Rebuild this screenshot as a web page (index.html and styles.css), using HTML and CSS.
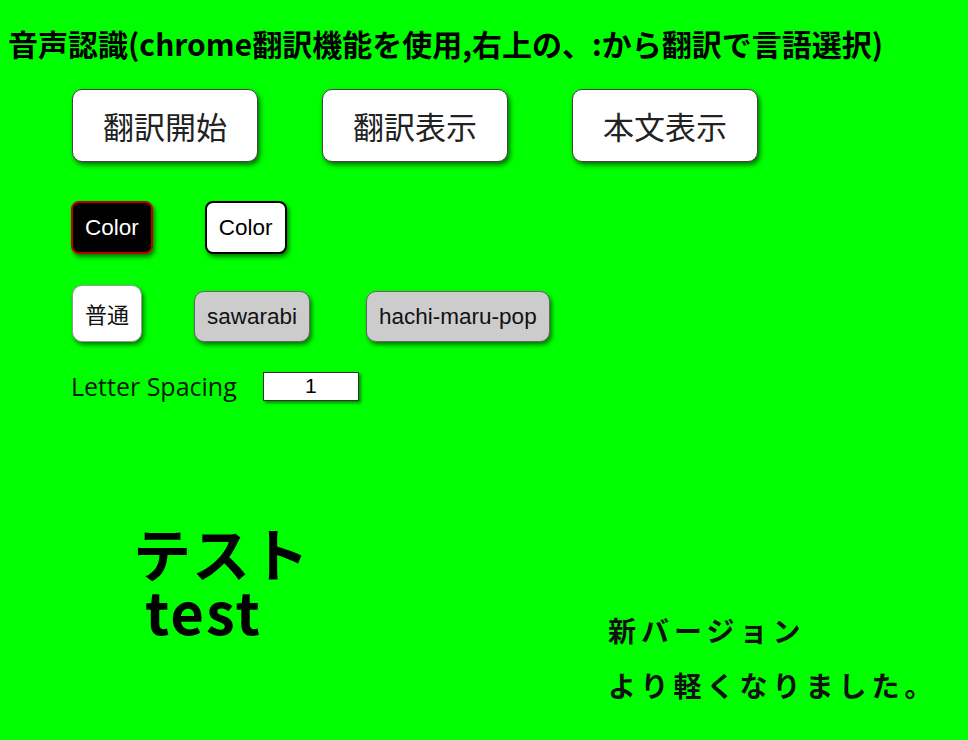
FILE: index.html
```html
<!DOCTYPE html>
<html lang="ja">
<head>
<meta charset="utf-8">
<title>音声認識</title>
<link rel="stylesheet" href="styles.css">
</head>
<body>
<h1 class="title">音声認識(chrome翻訳機能を使用,右上の、:から翻訳で言語選択)</h1>

<div class="row row-main">
  <button class="btn-big">翻訳開始</button>
  <button class="btn-big">翻訳表示</button>
  <button class="btn-big">本文表示</button>
</div>

<div class="row row-color">
  <button class="btn-color btn-dark">Color</button>
  <button class="btn-color btn-light">Color</button>
</div>

<div class="row row-font">
  <button class="btn-font btn-normal">普通</button>
  <button class="btn-font btn-gray">sawarabi</button>
  <button class="btn-font btn-gray btn-wide-gap">hachi-maru-pop</button>
</div>

<div class="row row-spacing">
  <span class="spacing-label">Letter Spacing</span>
  <input class="spacing-input" type="text" value="1">
</div>

<div class="stage">
  <div class="display">
    <div class="display-line">テスト</div>
    <div class="display-line display-indent">test</div>
  </div>
  <div class="notice">
    <div class="notice-line">新バージョン</div>
    <div class="notice-line">より軽くなりました。</div>
  </div>
</div>
</body>
</html>
```

FILE: styles.css
```css
html, body {
  background: #00ff00;
}
body {
  margin: 8px;
  font-family: "Noto Sans CJK JP", "Noto Sans", sans-serif;
  color: #000;
}
.title {
  margin: 14px 0 0 0;
  font-size: 30px;
  font-weight: 700;
  line-height: 43px;
  white-space: nowrap;
}
.row {
  display: flex;
  margin-left: 64px;
}
.row-main {
  margin-top: 24px;
  gap: 64px;
}
.btn-big {
  font-family: "Noto Sans CJK JP", sans-serif;
  font-size: 31px;
  font-weight: 400;
  line-height: 45px;
  color: #222;
  background: #fff;
  border: 1px solid #444;
  border-radius: 10px;
  padding: 13px 30px;
  box-shadow: 2px 3px 5px rgba(0, 0, 0, 0.55);
  cursor: pointer;
}
.row-color {
  margin-top: 39px;
  margin-left: 63px;
  gap: 52px;
}
.btn-color {
  font-family: "Liberation Sans", Arial, sans-serif;
  font-size: 22.5px;
  line-height: 25px;
  padding: 12px 12px;
  border-radius: 8px;
  box-shadow: 2px 3px 4px rgba(0, 0, 0, 0.5);
}
.btn-dark {
  background: #000;
  color: #fff;
  border: 2px solid #c00000;
}
.btn-light {
  background: #fff;
  color: #000;
  border: 2px solid #000;
}
.row-font {
  margin-top: 31px;
  align-items: flex-end;
  gap: 52px;
}
.btn-font {
  font-family: "Liberation Sans", Arial, sans-serif;
  font-size: 22.5px;
  line-height: 25px;
  color: #111;
  padding: 12px 12px;
  border: 1px solid #666;
  border-radius: 10px;
  box-shadow: 2px 3px 4px rgba(0, 0, 0, 0.5);
}
.btn-normal {
  font-family: "Noto Sans CJK JP", sans-serif;
  font-size: 22px;
  line-height: 31px;
  background: #fff;
  border-color: #999;
}
.btn-gray {
  background: #cccccc;
}
.btn-wide-gap {
  margin-left: 4px;
}
.row-spacing {
  margin-top: 27px;
  margin-left: 63px;
  align-items: center;
  gap: 26px;
}
.spacing-label {
  font-family: "Open Sans", "Noto Sans", sans-serif;
  font-size: 25px;
  line-height: 34px;
  color: #0a1a0a;
}
.spacing-input {
  box-sizing: border-box;
  width: 96px;
  height: 29px;
  border: 1px solid #333;
  background: #fff;
  font-family: "Liberation Sans", Arial, sans-serif;
  font-size: 21px;
  text-align: center;
  padding: 0;
  color: #000;
  box-shadow: 2px 2px 3px rgba(0, 0, 0, 0.45);
}
.stage {
  margin-top: 120px;
  margin-left: 125px;
  display: flex;
  align-items: flex-start;
}
.display {
  width: 475px;
  flex: none;
  font-size: 58px;
  font-weight: 700;
  line-height: 58px;
  letter-spacing: 1px;
}
.display-indent {
  padding-left: 12px;
  letter-spacing: 2px;
}
.notice {
  margin-top: 80px;
  font-size: 28px;
  font-weight: 700;
  line-height: 55px;
  letter-spacing: 5px;
  color: #111;
  white-space: nowrap;
}
```
